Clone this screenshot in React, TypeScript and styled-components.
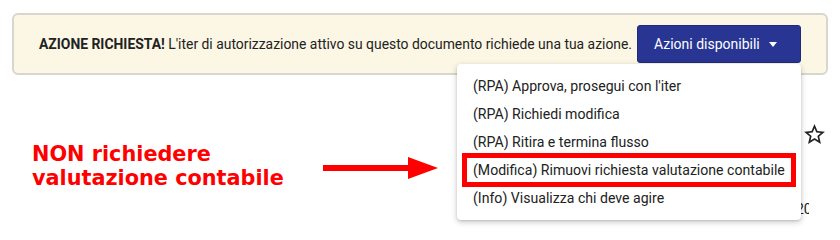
import React from "react";
import styled, { createGlobalStyle } from "styled-components";

const menuItems = [
  "(RPA) Approva, prosegui con l'iter",
  "(RPA) Richiedi modifica",
  "(RPA) Ritira e termina flusso",
  "(Modifica) Rimuovi richiesta valutazione contabile",
  "(Info) Visualizza chi deve agire",
];

const HIGHLIGHTED = 3;

export default function App(): JSX.Element {
  return (
    <Page>
      <GlobalStyle />
      <Banner>
        <Message>
          <strong>AZIONE RICHIESTA!</strong> L'iter di autorizzazione attivo su
          questo documento richiede una tua azione.
        </Message>
        <ActionsWrapper>
          <ActionsButton>
            Azioni disponibili
            <Caret />
          </ActionsButton>
          <Menu>
            {menuItems.map((label, i) => (
              <MenuItem key={label} $highlighted={i === HIGHLIGHTED}>
                {label}
              </MenuItem>
            ))}
          </Menu>
        </ActionsWrapper>
      </Banner>
      <Body>
        <Annotation>
          <AnnotationText>
            NON richiedere
            <br />
            valutazione contabile
          </AnnotationText>
          <Arrow width="115" height="22" viewBox="0 0 115 22">
            <rect x="0" y="8" width="86" height="6" fill="#ff0000" />
            <polygon points="85,0 115,11 85,22" fill="#ff0000" />
          </Arrow>
        </Annotation>
        <SideColumn>
          <StarIcon viewBox="0 0 24 24" width="25" height="25">
            <path
              fill="#222"
              d="M22 9.24l-7.19-.62L12 2 9.19 8.63 2 9.24l5.46 4.73L5.82 21 12 17.27 18.18 21l-1.63-7.03L22 9.24zM12 15.4l-3.76 2.27 1-4.28-3.32-2.88 4.38-.38L12 6.1l1.71 4.04 4.38.38-3.32 2.88 1 4.28L12 15.4z"
            />
          </StarIcon>
          <DateCell>2024</DateCell>
        </SideColumn>
      </Body>
    </Page>
  );
}

const GlobalStyle = createGlobalStyle`
  html, body {
    margin: 0;
    padding: 0;
    background: #ffffff;
    font-family: Roboto, "Liberation Sans", Arial, sans-serif;
  }
`;

const Page = styled.div`
  width: 840px;
  height: 230px;
  overflow: hidden;
  display: flex;
  flex-direction: column;
`;

const Banner = styled.div`
  margin: 13px 12px 0 12px;
  height: 62px;
  box-sizing: border-box;
  display: flex;
  align-items: center;
  padding: 0 25px;
  gap: 4px;
  background: #fcf7e5;
  border: 2px solid #d8d6cf;
  border-radius: 6px;
  position: relative;
  z-index: 2;
`;

const Message = styled.div`
  flex: 1;
  min-width: 0;
  white-space: nowrap;
  font-size: 13.9px;
  color: #222222;

  strong {
    font-weight: 700;
  }
`;

const ActionsWrapper = styled.div`
  position: relative;
  flex: none;
`;

const ActionsButton = styled.button`
  width: 164px;
  height: 38px;
  display: flex;
  align-items: center;
  gap: 9px;
  padding: 0 0 0 16px;
  background: #283593;
  color: #ffffff;
  border: 1px solid #1f2a7c;
  border-radius: 3px;
  font-family: Roboto, "Liberation Sans", Arial, sans-serif;
  font-size: 14px;
  cursor: pointer;
`;

const Caret = styled.span`
  width: 0;
  height: 0;
  border-left: 4.5px solid transparent;
  border-right: 4.5px solid transparent;
  border-top: 5px solid #ffffff;
  margin-top: 1px;
`;

const Menu = styled.ul`
  position: absolute;
  top: calc(100% + 1px);
  right: 0;
  width: 344px;
  box-sizing: border-box;
  margin: 0;
  padding: 8px 0;
  list-style: none;
  background: #ffffff;
  border-radius: 4px;
  box-shadow: 0 2px 6px rgba(0, 0, 0, 0.22), 0 1px 2px rgba(0, 0, 0, 0.12);
`;

const MenuItem = styled.li<{ $highlighted?: boolean }>`
  position: relative;
  height: 28px;
  display: flex;
  align-items: center;
  padding: 0 16px;
  font-size: 14.1px;
  color: #222222;
  white-space: nowrap;

  &::after {
    content: "";
    display: ${(p) => (p.$highlighted ? "block" : "none")};
    position: absolute;
    top: -3px;
    bottom: -3px;
    left: 5px;
    right: 5px;
    border: 5px solid #ff0000;
  }
`;

const Body = styled.div`
  flex: 1;
  display: flex;
  justify-content: space-between;
  padding: 0 11px 0 32px;
  position: relative;
  z-index: 1;
`;

const Annotation = styled.div`
  display: flex;
  align-items: center;
  margin-top: 67px;
  height: 48px;
`;

const AnnotationText = styled.div`
  width: 291px;
  font-family: "DejaVu Sans", "Liberation Sans", sans-serif;
  font-weight: 700;
  font-size: 20.8px;
  line-height: 24px;
  color: #ff0000;
`;

const Arrow = styled.svg`
  display: block;
  margin-top: 4px;
`;

const SideColumn = styled.div`
  width: 33px;
  display: flex;
  flex-direction: column;
  align-items: flex-start;
`;

const StarIcon = styled.svg`
  display: block;
  margin: 47px 0 0 6px;
`;

const DateCell = styled.div`
  width: 13px;
  overflow: hidden;
  margin-top: 52px;
  font-size: 14px;
  line-height: 20px;
  color: #222222;
`;
